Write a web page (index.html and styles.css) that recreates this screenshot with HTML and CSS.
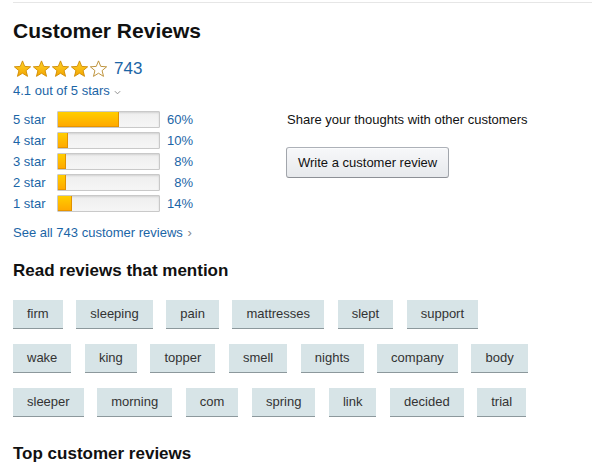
FILE: index.html
```html
<!DOCTYPE html>
<html lang="en">
<head>
<meta charset="utf-8">
<title>Customer Reviews</title>
<link rel="stylesheet" href="styles.css">
</head>
<body>
<svg class="defs" width="0" height="0" aria-hidden="true">
  <defs>
    <linearGradient id="starGrad" x1="0" y1="0" x2="0" y2="1">
      <stop offset="0" stop-color="#ffd42a"/>
      <stop offset="1" stop-color="#f3a500"/>
    </linearGradient>
  </defs>
</svg>
<div class="page">
  <div class="topline"></div>
  <h2 class="title">Customer Reviews</h2>
  <div class="rating">
    <span class="stars">
      <svg class="star" viewBox="0 0 20 20"><path class="full" d="M10 1 L12.47 7.1 L19.03 7.56 L13.99 11.8 L15.58 18.19 L10 14.7 L4.42 18.19 L6.01 11.8 L0.97 7.56 L7.53 7.1 Z"/></svg>
      <svg class="star" viewBox="0 0 20 20"><path class="full" d="M10 1 L12.47 7.1 L19.03 7.56 L13.99 11.8 L15.58 18.19 L10 14.7 L4.42 18.19 L6.01 11.8 L0.97 7.56 L7.53 7.1 Z"/></svg>
      <svg class="star" viewBox="0 0 20 20"><path class="full" d="M10 1 L12.47 7.1 L19.03 7.56 L13.99 11.8 L15.58 18.19 L10 14.7 L4.42 18.19 L6.01 11.8 L0.97 7.56 L7.53 7.1 Z"/></svg>
      <svg class="star" viewBox="0 0 20 20"><path class="full" d="M10 1 L12.47 7.1 L19.03 7.56 L13.99 11.8 L15.58 18.19 L10 14.7 L4.42 18.19 L6.01 11.8 L0.97 7.56 L7.53 7.1 Z"/></svg>
      <svg class="star" viewBox="0 0 20 20"><path class="empty" d="M10 1 L12.47 7.1 L19.03 7.56 L13.99 11.8 L15.58 18.19 L10 14.7 L4.42 18.19 L6.01 11.8 L0.97 7.56 L7.53 7.1 Z"/></svg>
    </span>
    <a class="count" href="#">743</a>
  </div>
  <div class="outof"><a href="#">4.1 out of 5 stars</a><svg class="caret" viewBox="0 0 8 5"><path d="M1 1 L4 4 L7 1" fill="none" stroke="#8a8a8a" stroke-width="1.1"/></svg></div>

  <div class="summary">
    <div class="left">
      <table class="histogram">
        <tr><td class="lbl"><a href="#">5 star</a></td><td class="barcell"><div class="meter"><div class="fill" style="width:60%"></div></div></td><td class="pct"><a href="#">60%</a></td></tr>
        <tr><td class="lbl"><a href="#">4 star</a></td><td class="barcell"><div class="meter"><div class="fill" style="width:10%"></div></div></td><td class="pct"><a href="#">10%</a></td></tr>
        <tr><td class="lbl"><a href="#">3 star</a></td><td class="barcell"><div class="meter"><div class="fill" style="width:8%"></div></div></td><td class="pct"><a href="#">8%</a></td></tr>
        <tr><td class="lbl"><a href="#">2 star</a></td><td class="barcell"><div class="meter"><div class="fill" style="width:8%"></div></div></td><td class="pct"><a href="#">8%</a></td></tr>
        <tr><td class="lbl"><a href="#">1 star</a></td><td class="barcell"><div class="meter"><div class="fill" style="width:14%"></div></div></td><td class="pct"><a href="#">14%</a></td></tr>
      </table>
      <a class="seeall" href="#">See all 743 customer reviews <span class="chev">›</span></a>
    </div>
    <div class="right">
      <div class="share">Share your thoughts with other customers</div>
      <button class="btn" type="button">Write a customer review</button>
    </div>
  </div>

  <h3 class="section">Read reviews that mention</h3>
  <div class="tags">
    <div class="tagrow">
      <span class="tag">firm</span><span class="tag">sleeping</span><span class="tag">pain</span><span class="tag">mattresses</span><span class="tag">slept</span><span class="tag">support</span>
    </div>
    <div class="tagrow">
      <span class="tag">wake</span><span class="tag">king</span><span class="tag">topper</span><span class="tag">smell</span><span class="tag">nights</span><span class="tag">company</span><span class="tag">body</span>
    </div>
    <div class="tagrow">
      <span class="tag">sleeper</span><span class="tag">morning</span><span class="tag">com</span><span class="tag">spring</span><span class="tag">link</span><span class="tag">decided</span><span class="tag">trial</span>
    </div>
  </div>

  <h3 class="section top">Top customer reviews</h3>
</div>
</body>
</html>
```

FILE: styles.css
```css
html, body {
  margin: 0;
  padding: 0;
  background: #ffffff;
}
body {
  font-family: "Liberation Sans", Arial, sans-serif;
  font-size: 13px;
  color: #111;
}
.defs {
  position: absolute;
  width: 0;
  height: 0;
}
a {
  color: #1b65a6;
  text-decoration: none;
}
.page {
  padding-left: 13px;
  padding-top: 2px;
}
.topline {
  height: 0;
  border-top: 1px solid #e6e6e6;
}
.title {
  margin: 16px 0 0;
  font-size: 21px;
  line-height: 24px;
  font-weight: 700;
  color: #111;
}
.rating {
  margin-top: 16px;
  display: flex;
  align-items: center;
  height: 20px;
}
.stars {
  display: flex;
  align-items: center;
}
.star {
  width: 19px;
  height: 18px;
  display: block;
}
.star .full {
  fill: url(#starGrad);
  stroke: #cf8a00;
  stroke-width: 1;
  stroke-linejoin: round;
}
.star .empty {
  fill: #ffffff;
  stroke: #b8892a;
  stroke-width: 1;
  stroke-linejoin: round;
}
.count {
  margin-left: 6px;
  font-size: 17px;
  line-height: 20px;
}
.outof {
  margin-top: 4px;
  line-height: 16px;
  display: flex;
  align-items: center;
}
.caret {
  width: 7px;
  height: 5px;
  margin-left: 4px;
  margin-top: 2px;
}
.summary {
  margin-top: 10px;
  display: flex;
}
.left {
  width: 274px;
}
.histogram {
  border-collapse: collapse;
}
.histogram td {
  padding: 0;
  height: 21px;
  line-height: 16px;
  vertical-align: middle;
}
.lbl {
  width: 44px;
  white-space: nowrap;
}
.barcell {
  width: 103px;
}
.meter {
  box-sizing: border-box;
  width: 103px;
  height: 17px;
  border: 1px solid #c9c9c9;
  border-radius: 1px;
  background: linear-gradient(to bottom, #eeeeee, #f6f6f6);
  box-shadow: inset 0 1px 2px rgba(0, 0, 0, 0.12);
  overflow: hidden;
}
.fill {
  height: 100%;
  box-sizing: border-box;
  background: linear-gradient(to bottom, #ffce00, #ffa700);
  border-right: 1px solid #e09200;
  box-shadow: inset 0 -1px 0 rgba(196, 120, 0, 0.4);
}
.pct {
  width: 33px;
  text-align: right;
}
.seeall {
  display: block;
  margin-top: 11px;
  line-height: 16px;
}
.chev {
  color: #888;
  margin-left: 1px;
}
.right {
  padding-top: 3px;
}
.share {
  line-height: 16px;
  color: #111;
}
.btn {
  margin-top: 19px;
  margin-left: -1px;
  height: 31px;
  padding: 0 11px;
  font-family: "Liberation Sans", Arial, sans-serif;
  font-size: 13px;
  color: #111;
  background: linear-gradient(to bottom, #f7f8fa, #e7e9ec);
  border: 1px solid #adb1b8;
  border-color: #adb1b8 #a2a6ac #8d9096;
  border-radius: 3px;
  box-shadow: inset 0 1px 0 rgba(255, 255, 255, 0.6);
  display: block;
}
.section {
  margin: 20px 0 0;
  font-size: 17px;
  line-height: 20px;
  font-weight: 700;
  color: #111;
}
.tags {
  margin-top: 19px;
  display: flex;
  flex-direction: column;
  gap: 15px;
}
.tagrow {
  display: flex;
  gap: 13.6px;
}
.tag {
  box-sizing: border-box;
  height: 29px;
  padding: 0 14px;
  line-height: 28px;
  background: #d7e4e7;
  border-bottom: 1px solid #8c989c;
  color: #333;
  white-space: nowrap;
}
.section.top {
  margin-top: 27px;
}
```
